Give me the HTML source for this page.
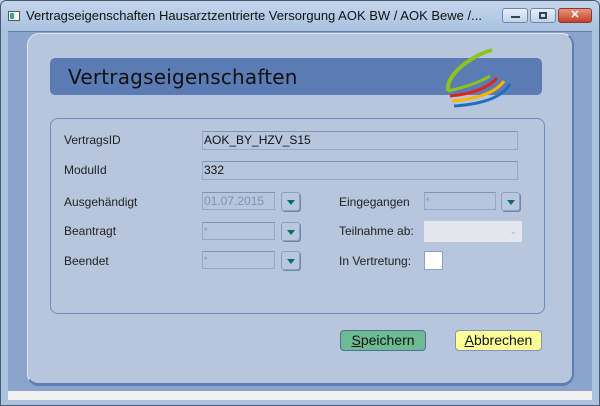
<!DOCTYPE html>
<html><head><meta charset="utf-8"><style>
*{margin:0;padding:0;box-sizing:border-box}
body{width:600px;height:406px;overflow:hidden;background:#a9c2e0;font-family:"Liberation Sans",sans-serif;position:relative}
.abs{position:absolute}
.lbl{position:absolute;font-size:12px;color:#222}
.inp{position:absolute;border:1px solid #94a8c8;border-top-color:#7f93b5;background:#b7c5dd;font-size:12px;color:#111;padding-left:1px;line-height:17px}
.btn{position:absolute;width:19px;height:19px;border:1px solid #8aa0c4;border-radius:3px;background:#b9c7df;box-shadow:1px 1px 0 #6f86ad}
.btn:after{content:"";position:absolute;left:5px;top:7px;border-left:4px solid transparent;border-right:4px solid transparent;border-top:5px solid #0d6b66}
</style></head><body>
<div class="abs" style="left:0;top:0;width:600px;height:31px;background:linear-gradient(#c4d6ec,#a9c2e0)"></div>
<div class="abs" style="left:0;top:0;width:600px;height:406px;border:1px solid #4a5a70;border-radius:6px 6px 0 0;z-index:5;pointer-events:none"></div>
<div class="abs" style="left:8px;top:11px;width:12px;height:10px;border:1px solid #555;background:#fff"><div style="position:absolute;left:1px;top:1px;width:4px;height:6px;background:#3a8"></div></div>
<div class="abs" style="left:26px;top:8px;font-size:13px;color:#111;white-space:nowrap">Vertragseigenschaften Hausarztzentrierte Versorgung AOK BW / AOK Bewe /...</div>
<div class="abs" style="left:502px;top:8px;width:26px;height:15px;border:1px solid #6f86ad;border-radius:3px;background:linear-gradient(#e6eef8,#c2d2e8)"><div style="position:absolute;left:8px;top:7px;width:9px;height:2px;background:#345"></div></div>
<div class="abs" style="left:530px;top:8px;width:26px;height:15px;border:1px solid #6f86ad;border-radius:3px;background:linear-gradient(#e6eef8,#c2d2e8)"><div style="position:absolute;left:8px;top:3px;width:8px;height:7px;border:2px solid #345"></div></div>
<div class="abs" style="left:558px;top:8px;width:34px;height:15px;border:1px solid #8a3a2a;border-radius:3px;background:linear-gradient(#e8947c,#c4412a);color:#fff;font-size:11px;font-weight:bold;text-align:center;line-height:13px">✕</div>
<div class="abs" style="left:8px;top:31px;width:584px;height:360px;background:#8ba4cb;border-top:1px solid #6a7fa8"></div>
<div class="abs" style="left:27px;top:33px;width:547px;height:353px;background:#b7c5dd;border-radius:12px;border:1px solid #dde6f2;border-right:2px solid #5f7db5;border-bottom:3px solid #5f7db5"></div>
<div class="abs" style="left:8px;top:391px;width:584px;height:9px;background:#f0f0f0"></div>
<div class="abs" style="left:50px;top:58px;width:492px;height:37px;background:#5b7bb5;border-radius:5px"></div>
<div class="abs" style="left:68px;top:65px;font-family:'Comic Sans MS','DejaVu Sans',sans-serif;font-size:20px;color:#111;letter-spacing:0.2px">Vertragseigenschaften</div>
<svg class="abs" style="left:440px;top:46px" width="90" height="65" viewBox="0 0 90 65">
<path d="M52 4 C30 10 5 30 8 45" stroke="#8ec21f" stroke-width="4" fill="none"/>
<path d="M8 45 C30 40 42 35 50 30" stroke="#8ec21f" stroke-width="3" fill="none"/>
<path d="M10 50 C35 48 50 40 57 32" stroke="#e2231a" stroke-width="3" fill="none"/>
<path d="M12 55 C40 53 57 45 64 35" stroke="#f7b500" stroke-width="3" fill="none"/>
<path d="M14 60 C45 58 63 50 70 38" stroke="#1f6fc0" stroke-width="3" fill="none"/>
</svg>
<div class="abs" style="left:50px;top:118px;width:495px;height:196px;border:1px solid #6f8cc0;border-radius:8px"></div>
<div class="lbl" style="left:64px;top:133px">VertragsID</div>
<div class="inp" style="left:202px;top:131px;width:316px;height:19px">AOK_BY_HZV_S15</div>
<div class="lbl" style="left:64px;top:163px">ModulId</div>
<div class="inp" style="left:202px;top:161px;width:316px;height:19px">332</div>
<div class="lbl" style="left:64px;top:195px">Ausgehändigt</div>
<div class="inp" style="left:202px;top:192px;width:73px;height:18px;color:#7f93b5">01.07.2015</div>
<div class="btn" style="left:281px;top:192px"></div>
<div class="lbl" style="left:64px;top:224px">Beantragt</div>
<div class="inp" style="left:202px;top:222px;width:73px;height:18px;color:#7f93b5;font-size:9px">*</div>
<div class="btn" style="left:281px;top:222px"></div>
<div class="lbl" style="left:64px;top:254px">Beendet</div>
<div class="inp" style="left:202px;top:251px;width:73px;height:18px;color:#7f93b5;font-size:9px">*</div>
<div class="btn" style="left:281px;top:251px"></div>
<div class="lbl" style="left:339px;top:195px">Eingegangen</div>
<div class="inp" style="left:424px;top:192px;width:72px;height:18px;color:#7f93b5;font-size:9px">*</div>
<div class="btn" style="left:501px;top:192px"></div>
<div class="lbl" style="left:339px;top:224px">Teilnahme ab:</div>
<div class="abs" style="left:424px;top:221px;width:98px;height:21px;background:#e3e7ed;color:#aab;font-size:9px;text-align:right;padding:5px 5px 0 0">&#8964;</div>
<div class="lbl" style="left:339px;top:254px">In Vertretung:</div>
<div class="abs" style="left:424px;top:251px;width:19px;height:19px;background:#fff;border:1px solid #8aa0c4"></div>
<div class="abs" style="left:340px;top:330px;width:86px;height:21px;background:#6dbb92;border:1px solid #4d6f9a;border-radius:4px;font-size:14px;text-align:center;line-height:19px;color:#111"><u>S</u>peichern</div>
<div class="abs" style="left:455px;top:330px;width:87px;height:21px;background:#ffff99;border:1px solid #7f93b5;border-radius:4px;font-size:14px;text-align:center;line-height:19px;color:#111"><u>A</u>bbrechen</div>
</body></html>
